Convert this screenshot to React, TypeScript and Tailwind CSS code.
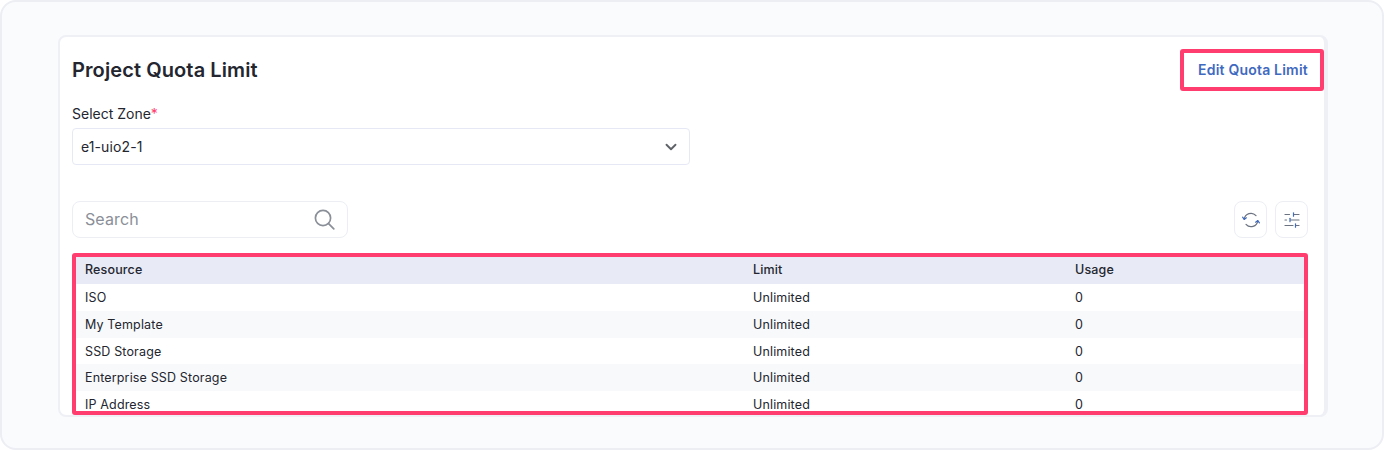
import { ChevronDown } from 'lucide-react'

const rows = ['ISO', 'My Template', 'SSD Storage', 'Enterprise SSD Storage', 'IP Address']

function SearchIcon() {
  return (
    <svg width="21" height="21" viewBox="0 0 21 21" fill="none" stroke="#8a8f98" strokeWidth="1.7" strokeLinecap="round">
      <circle cx="9" cy="9" r="7.6" />
      <path d="M14.6 14.6l5.2 5.2" />
    </svg>
  )
}

function RefreshIcon() {
  return (
    <svg width="18" height="18" viewBox="0 0 18 18" fill="none" strokeWidth="1.2" strokeLinecap="round" strokeLinejoin="round">
      <path d="M2.2 8.2A6.8 6.8 0 0 1 14 4.6" stroke="#6b7280" />
      <path d="M15.8 9.8A6.8 6.8 0 0 1 4 13.4" stroke="#6b7280" />
      <path d="M.6 6.2l1.6 2.2 2.2-1.6" stroke="#3f6ac0" />
      <path d="M17.4 11.8l-1.6-2.2-2.2 1.6" stroke="#3f6ac0" />
    </svg>
  )
}

function SlidersIcon() {
  return (
    <svg width="16" height="16" viewBox="0 0 16 16" fill="none" strokeWidth="1.2" strokeLinecap="round">
      <path d="M1 2.5h4.5M9.5 2.5H15" stroke="#6b7280" />
      <path d="M9.5 .8v3.4" stroke="#3f6ac0" />
      <path d="M1 8h1.5M6.5 8H15" stroke="#6b7280" />
      <path d="M6 6.3v3.4" stroke="#3f6ac0" />
      <path d="M1 13.5h8M12 13.5h3" stroke="#6b7280" />
      <path d="M11.5 11.8v3.4" stroke="#3f6ac0" />
    </svg>
  )
}

export default function App() {
  return (
    <div className="h-[450px] w-[1384px] overflow-hidden font-['Inter',sans-serif]">
      <div className="h-[450px] rounded-2xl border-2 border-[#eceef3] bg-[#fafbfd] pl-[56px] pt-[33px]">
        <div className="flex h-[382px] w-[1270px] flex-col rounded-lg border-2 border-r-4 border-[#eef0f5] bg-white pl-3 pt-3">
          <div className="flex items-center justify-between">
            <h1 className="text-[20px] font-semibold tracking-[0.1px] text-[#23262f]">Project Quota Limit</h1>
            <button className="h-[42px] w-[144px] rounded-[3px] border-4 border-[#ff3d6e] pb-[2px] pl-[2px] text-[14px] font-semibold tracking-[0.2px] text-[#3f6ac0]">
              Edit Quota Limit
            </button>
          </div>
          <label className="mt-3 h-5 pt-px text-[14px] leading-5 text-[#23262f]">
            Select Zone<span className="text-[#ff3d6e]">*</span>
          </label>
          <div className="mt-[5px] flex h-[37px] w-[618px] items-center justify-between rounded border border-[#e6e9f5] pl-2 pr-[9px] text-[14px] tracking-[0.1px] text-[#23262f]">
            <span>e1-uio2-1</span>
            <ChevronDown className="h-[18px] w-[18px] text-[#5f6368]" strokeWidth={2.5} />
          </div>
          <div className="mt-9 flex h-[37px] items-center justify-between pr-[16px]">
            <div className="flex h-[37px] w-[276px] items-center justify-between rounded-lg border border-[#eceef3] pl-3 pr-[12px] text-[16px] tracking-[0.1px] text-[#8a8f98]">
              <span className="pb-px">Search</span>
              <SearchIcon />
            </div>
            <div className="flex gap-2">
              <button className="flex h-[37px] w-[33px] items-center justify-center rounded-lg border border-[#eceef3]">
                <RefreshIcon />
              </button>
              <button className="flex h-[37px] w-[33px] items-center justify-center rounded-lg border border-[#eceef3]">
                <SlidersIcon />
              </button>
            </div>
          </div>
          <div className="mt-[15px] h-[162px] w-[1236px] overflow-hidden rounded-[3px] border-4 border-[#ff3d6e] text-[12.5px] tracking-[0.15px] text-[#23262f]">
            <div className="grid h-[27px] grid-cols-[668px_322px_1fr] items-center bg-[#e8eaf5] pl-[9px] font-medium">
              <span>Resource</span>
              <span>Limit</span>
              <span>Usage</span>
            </div>
            {rows.map((name, i) => (
              <div
                key={name}
                className={`grid h-[26.75px] grid-cols-[668px_322px_1fr] items-center pl-[9px] pt-[2px] ${i % 2 === 1 ? 'bg-[#f8f9fb]' : 'bg-white'}`}
              >
                <span>{name}</span>
                <span>Unlimited</span>
                <span>0</span>
              </div>
            ))}
          </div>
        </div>
      </div>
    </div>
  )
}
